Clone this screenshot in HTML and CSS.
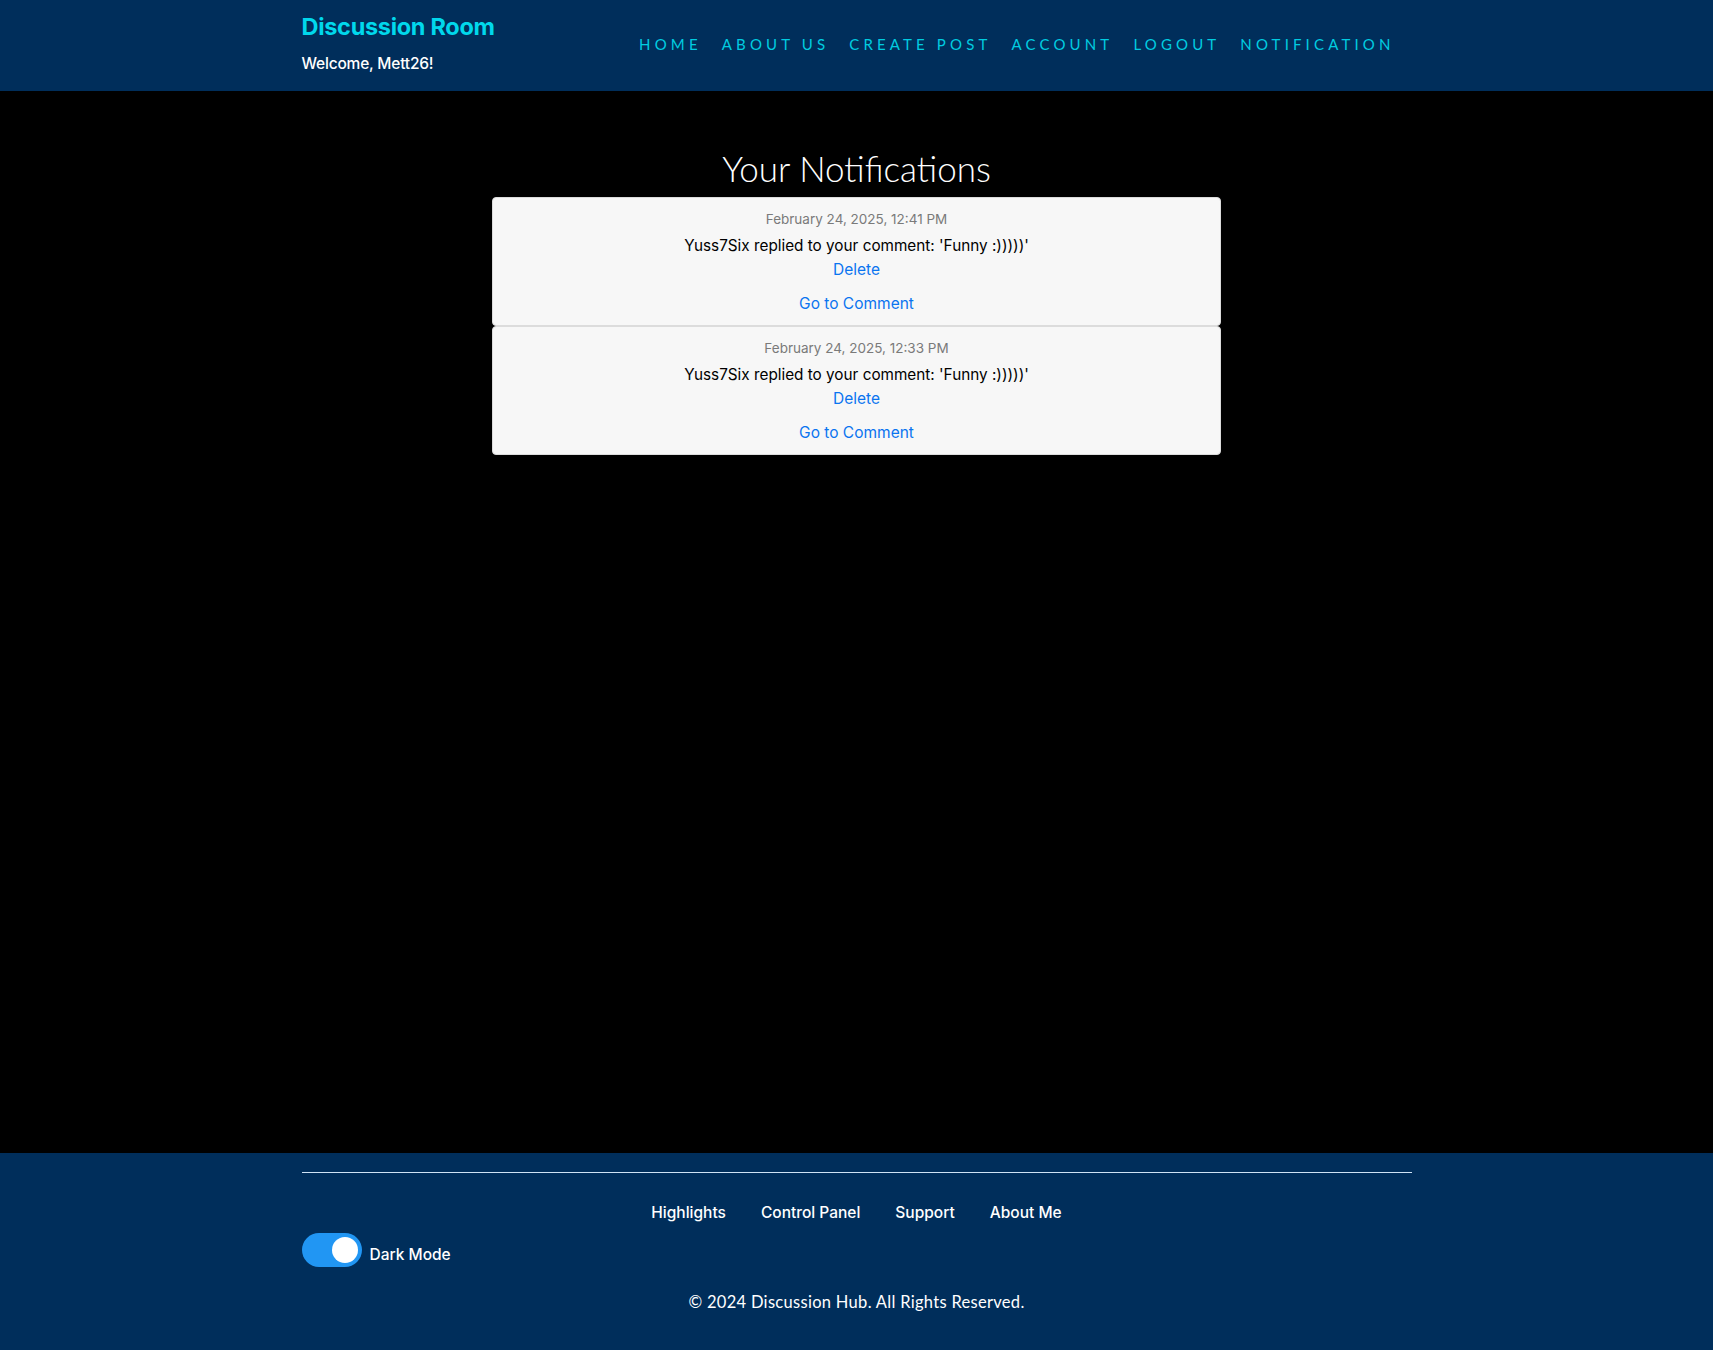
FILE: index.html
```html
<!DOCTYPE html>
<html lang="en">
<head>
<meta charset="utf-8">
<title>Notifications - Discussion Room</title>
<link rel="stylesheet" href="styles.css">
</head>
<body>
<header class="site-header">
  <div class="container header-inner">
    <div class="brand-block">
      <a class="brand" href="#">Discussion Room</a>
      <div class="welcome">Welcome, Mett26!</div>
    </div>
    <nav class="main-nav">
      <a href="#">HOME</a>
      <a href="#">ABOUT US</a>
      <a href="#">CREATE POST</a>
      <a href="#">ACCOUNT</a>
      <a href="#">LOGOUT</a>
      <a href="#">NOTIFICATION</a>
    </nav>
  </div>
</header>

<main class="content">
  <h2 class="page-title">Your Notifications</h2>
  <ul class="notif-list">
    <li class="notif-card">
      <div class="notif-date">February 24, 2025, 12:41 PM</div>
      <div class="notif-msg">Yuss7Six replied to your comment: 'Funny :)))))'</div>
      <a class="notif-link" href="#">Delete</a>
      <a class="notif-link goto" href="#">Go to Comment</a>
    </li>
    <li class="notif-card">
      <div class="notif-date">February 24, 2025, 12:33 PM</div>
      <div class="notif-msg">Yuss7Six replied to your comment: 'Funny :)))))'</div>
      <a class="notif-link" href="#">Delete</a>
      <a class="notif-link goto" href="#">Go to Comment</a>
    </li>
  </ul>
</main>

<footer class="site-footer">
  <div class="container">
    <hr class="footer-rule">
    <nav class="footer-nav">
      <a href="#">Highlights</a>
      <a href="#">Control Panel</a>
      <a href="#">Support</a>
      <a href="#">About Me</a>
    </nav>
    <div class="toggle-row">
      <label class="switch">
        <span class="slider"></span>
      </label>
      <span class="toggle-label">Dark Mode</span>
    </div>
    <p class="copyright">© 2024 Discussion Hub. All Rights Reserved.</p>
  </div>
</footer>
</body>
</html>
```

FILE: styles.css
```css
* { box-sizing: border-box; }

html, body {
  margin: 0;
  padding: 0;
}

body {
  background: #000;
  font-family: Inter, Roboto, "Helvetica Neue", Arial, sans-serif;
  font-size: 16px;
  line-height: 1.5;
  color: #212529;
  min-height: 100vh;
  display: flex;
  flex-direction: column;
}

a { text-decoration: none; }

.container {
  width: 1140px;
  margin: 0 auto;
  padding: 0 15px;
}

/* Header */
.site-header {
  background: #002e5b;
  height: 91px;
}

.header-inner {
  display: flex;
  justify-content: space-between;
  align-items: center;
  height: 100%;
}

.brand-block {
  display: flex;
  flex-direction: column;
  align-self: flex-start;
  padding-top: 10px;
}

.brand {
  color: #00d8ec;
  font-weight: 700;
  font-size: 23.5px;
  line-height: 34px;
  letter-spacing: -0.3px;
}

.welcome {
  color: #fff;
  font-size: 15.5px;
  font-weight: 500;
  line-height: 24px;
  margin-top: 8px;
  letter-spacing: -0.2px;
}

.main-nav {
  display: flex;
  gap: 20px;
  padding-right: 17px;
  padding-bottom: 2px;
}

.main-nav a {
  color: #00cce0;
  font-family: Lato, "Open Sans", sans-serif;
  font-weight: 400;
  font-size: 15px;
  letter-spacing: 4.15px;
}

/* Content */
.content {
  flex: 1;
  padding-top: 57px;
}

.page-title {
  margin: 0 0 9px;
  text-align: center;
  color: #fff;
  font-family: Lato, "Open Sans", sans-serif;
  font-weight: 300;
  font-size: 35px;
  line-height: 40px;
}

.notif-list {
  list-style: none;
  margin: 0 auto;
  padding: 0;
  width: 729px;
}

.notif-card {
  background: #f7f7f7;
  border: 1px solid #dcdcdc;
  border-radius: 4px;
  padding: 11px 10px 9px;
  text-align: center;
  display: flex;
  flex-direction: column;
  align-items: center;
}

.notif-date {
  color: #7a7a7a;
  font-size: 13.5px;
  line-height: 21px;
  margin-bottom: 4px;
}

.notif-msg {
  color: #000;
  font-size: 15.3px;
  line-height: 24px;
}

.notif-link {
  color: #0a74f0;
  font-size: 15.5px;
  line-height: 24px;
}

.notif-link.goto {
  margin-top: 10px;
}

/* Footer */
.site-footer {
  background: #002e5b;
  height: 197px;
  padding-top: 19px;
  color: #fff;
}

.footer-rule {
  margin: 0;
  border: 0;
  border-top: 1px solid #cfe3f5;
}

.footer-nav {
  display: flex;
  justify-content: center;
  gap: 35px;
  margin-top: 28px;
}

.footer-nav a {
  color: #fff;
  font-size: 15.5px;
  font-weight: 500;
  line-height: 24px;
}

.toggle-row {
  display: flex;
  align-items: center;
  gap: 8px;
  margin-top: 8px;
}

.switch {
  position: relative;
  display: inline-block;
  width: 60px;
  height: 34px;
}

.slider {
  position: absolute;
  inset: 0;
  background: #2196f3;
  border-radius: 34px;
}

.slider::before {
  content: "";
  position: absolute;
  width: 26px;
  height: 26px;
  right: 4px;
  top: 4px;
  background: #fff;
  border-radius: 50%;
}

.toggle-label {
  font-size: 15.5px;
  font-weight: 500;
  line-height: 24px;
  margin-top: 9px;
}

.copyright {
  margin: 23px 0 0;
  text-align: center;
  font-family: Lato, "Open Sans", sans-serif;
  font-weight: 400;
  font-size: 16.5px;
  letter-spacing: 0.3px;
  line-height: 24px;
}
```
